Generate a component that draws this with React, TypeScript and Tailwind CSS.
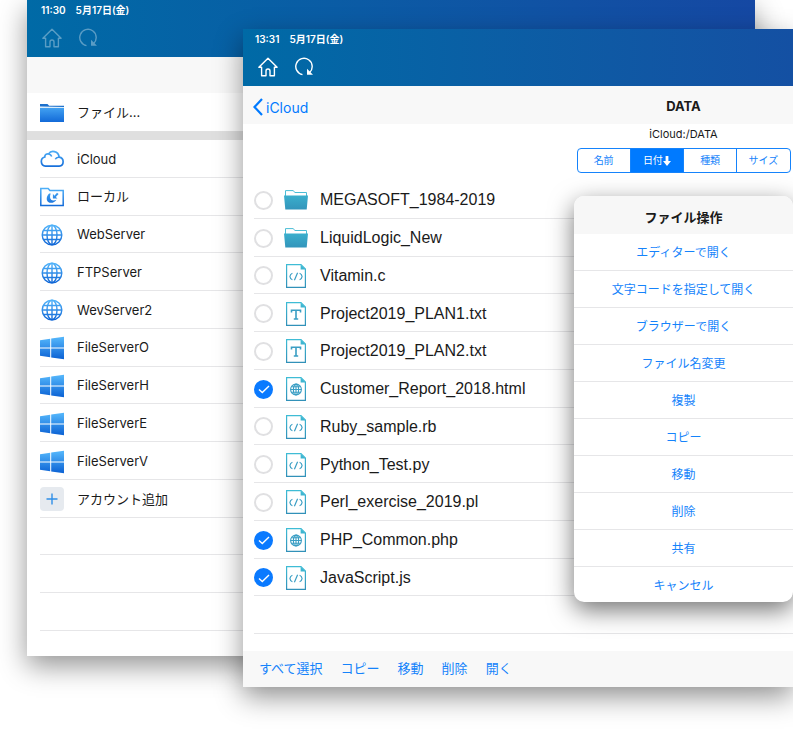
import type { ReactNode } from "react";
import clsx from "clsx";

type FileKind = "folder" | "code" | "text" | "web";

const SERVERS = [
  { name: "iCloud", icon: "cloud" },
  { name: "ローカル", icon: "local" },
  { name: "WebServer", icon: "globe" },
  { name: "FTPServer", icon: "globe" },
  { name: "WevServer2", icon: "globe" },
  { name: "FileServerO", icon: "windows" },
  { name: "FileServerH", icon: "windows" },
  { name: "FileServerE", icon: "windows" },
  { name: "FileServerV", icon: "windows" },
  { name: "アカウント追加", icon: "plus" },
];

const FILES: { name: string; kind: FileKind; checked: boolean }[] = [
  { name: "MEGASOFT_1984-2019", kind: "folder", checked: false },
  { name: "LiquidLogic_New", kind: "folder", checked: false },
  { name: "Vitamin.c", kind: "code", checked: false },
  { name: "Project2019_PLAN1.txt", kind: "text", checked: false },
  { name: "Project2019_PLAN2.txt", kind: "text", checked: false },
  { name: "Customer_Report_2018.html", kind: "web", checked: true },
  { name: "Ruby_sample.rb", kind: "code", checked: false },
  { name: "Python_Test.py", kind: "code", checked: false },
  { name: "Perl_exercise_2019.pl", kind: "code", checked: false },
  { name: "PHP_Common.php", kind: "web", checked: true },
  { name: "JavaScript.js", kind: "code", checked: true },
];

const SORT_KEYS = ["名前", "日付", "種類", "サイズ"];

const FILE_ACTIONS = [
  "エディターで開く",
  "文字コードを指定して開く",
  "ブラウザーで開く",
  "ファイル名変更",
  "複製",
  "コピー",
  "移動",
  "削除",
  "共有",
  "キャンセル",
];

const TOOLBAR = ["すべて選択", "コピー", "移動", "削除", "開く"];

const Gradients = () => (
  <svg className="absolute size-0" aria-hidden="true">
    <defs>
      <linearGradient id="blue" gradientUnits="userSpaceOnUse" x1="0" y1="2" x2="0" y2="22">
        <stop offset="0" stopColor="#52b4fa" />
        <stop offset="1" stopColor="#0f66d6" />
      </linearGradient>
      <linearGradient id="teal" gradientUnits="userSpaceOnUse" x1="0" y1="0" x2="0" y2="24">
        <stop offset="0" stopColor="#3fbdd6" />
        <stop offset="1" stopColor="#3190b8" />
      </linearGradient>
    </defs>
  </svg>
);

const Svg = ({ children }: { children: ReactNode }) => (
  <svg className="size-6 shrink-0" viewBox="0 0 24 24" fill="none" aria-hidden="true">
    {children}
  </svg>
);

const ServerIcon = ({ icon }: { icon: string }) => {
  switch (icon) {
    case "folder":
      return (
        <Svg>
          <path d="M0 5.500V3h7.500l1.600 1.700H24V6z" fill="#1c70cc" />
          <path d="M0 6.800h24V21H0z" fill="url(#blue)" />
        </Svg>
      );
    case "cloud":
      return (
        <Svg>
          <path
            d="M5.500 19.200A4.700 4.700 0 0 1 4.800 10C4.700 7.700 6.600 6.500 8.600 6.900 11 3 18.300 3.700 19.200 10.200 24.500 11 24.400 18.700 19.200 19.200z"
            stroke="url(#blue)"
            strokeWidth="1.700"
          />
          <path d="M8.600 6.900c1.500.2 2.700 1.100 3.100 2.600M15.300 12.300c.6-1.500 2-2.300 3.900-2.100" stroke="url(#blue)" strokeWidth="1.500" />
        </Svg>
      );
    case "local":
      return (
        <Svg>
          <path d="M.8 20.600V3.400h7.400l1.700 2h13.300v15.200z" stroke="url(#blue)" strokeWidth="1.500" />
          <path
            d="M9.200 8.400C6.300 11 6 15 8.200 16.900c2.400 1.900 6.500.8 8.300-2.200-1.900.8-4.200 1.100-5.400 0-1.300-1.300-1.300-4-.4-6.300z"
            fill="url(#blue)"
          />
          <path d="M12.900 8.800v4.800h4.600L15.800 12l2.800-3-1.600-1.200-2.600 2.900z" fill="url(#blue)" />
        </Svg>
      );
    case "globe":
      return (
        <Svg>
          <g stroke="url(#blue)" strokeWidth="1.400">
            <circle cx="12" cy="12" r="9.800" />
            <ellipse cx="12" cy="12" rx="5" ry="9.800" />
            <path d="M12.010 2 12 22M2 12.010 22 12M3.500 7.500h17M3.500 16.500h17" />
          </g>
        </Svg>
      );
    case "windows":
      return (
        <Svg>
          <path
            d="M0 4.200 10.200 2.700v8.800H0zM11.200 2.500 24 .7v10.800H11.200zM0 12.500h10.200v8.800L0 19.800zM11.200 12.500H24v10.800l-12.800-1.800z"
            fill="url(#blue)"
          />
        </Svg>
      );
    default:
      return (
        <span className="flex size-6 shrink-0 items-center justify-center rounded bg-[#e6eaef]">
          <svg className="size-3" viewBox="0 0 12 12" aria-hidden="true">
            <path d="M6 .5v11M.5 6h11" stroke="#2f8fe8" strokeWidth="1.400" />
          </svg>
        </span>
      );
  }
};

const FileIcon = ({ kind }: { kind: FileKind }) => {
  if (kind === "folder") {
    return (
      <Svg>
        <path d="M1.500 9V2.600h7.800l1.500 1.900h11.700V9" stroke="#4bbdd6" strokeWidth="1" />
        <path d="M0 7.500h24L22.700 21.500H1.300z" fill="url(#teal)" />
      </Svg>
    );
  }
  return (
    <Svg>
      <path d="M2.600.6h14.400l4.400 4.400v18.400H2.600z" stroke="url(#teal)" strokeWidth="1.200" />
      <path d="M16.600.6v4.800h4.800z" fill="url(#teal)" />
      {kind === "code" && (
        <path
          d="M8.400 9.200c-1.600.6-2.300 1.700-2.500 3.300.2 1.600.9 2.700 2.500 3.300M15.600 9.200c1.600.6 2.300 1.700 2.500 3.300-.2 1.600-.9 2.700-2.500 3.300M13.600 8.700l-3.200 7.600"
          stroke="#3a9ec4"
          strokeWidth="1.200"
        />
      )}
      {kind === "text" && (
        <path d="M7.500 10.500V8.200h9v2.300M12 8.200v8.800M9.800 17h4.400" stroke="#3a9ec4" strokeWidth="1.600" />
      )}
      {kind === "web" && (
        <g stroke="#3a9ec4" strokeWidth="1.100">
          <circle cx="12" cy="12.500" r="5.400" />
          <ellipse cx="12" cy="12.500" rx="2.600" ry="5.400" />
          <path d="M12 7v11M6.600 12.500h10.800M7.500 9.800h9M7.500 15.200h9" />
        </g>
      )}
    </Svg>
  );
};

const WindowHeader = ({ time, dimmed }: { time: string; dimmed?: boolean }) => (
  <header
    className={clsx(
      "h-[57px] shrink-0 bg-linear-to-r from-[#006aa6] pt-1 text-white",
      dimmed ? "to-[#1548a3]" : "to-[#1450a3]",
    )}
  >
    <div className={clsx("flex gap-2.5 text-[10px] leading-3 font-semibold", dimmed ? "px-3.5" : "px-3")}>
      <span>{time}</span>
      <span>5月17日(金)</span>
    </div>
    <div className={clsx("mt-3 flex gap-4 px-[15px]", dimmed && "opacity-35")}>
      <button type="button" aria-label="ホーム">
        <svg className="size-5" viewBox="0 0 20 20" fill="none" stroke="currentColor" strokeWidth="1.400" aria-hidden="true">
          <path d="M10 1.200.9 10.200H3.600V18.800H8V14a2 2 0 0 1 4 0v4.800h4.400v-8.600h2.700z" strokeLinejoin="round" />
        </svg>
      </button>
      <button type="button" aria-label="更新">
        <svg className="size-5" viewBox="0 0 20 20" fill="none" stroke="currentColor" strokeWidth="1.400" aria-hidden="true">
          <path d="M8.500 17.600A8.200 8.200 0 1 1 15.600 15.500" />
          <path d="M13 11.800v6h6z" fill="currentColor" stroke="none" />
        </svg>
      </button>
    </div>
  </header>
);

const ServerRow = ({ name, icon }: { name: string; icon: string }) => (
  <button type="button" className="flex size-full items-center gap-[13px] pt-0.5 text-left text-[13px]">
    <ServerIcon icon={icon} />
    {name}
  </button>
);

const ServerWindow = () => (
  <section className="absolute top-0 right-[38px] bottom-[73px] left-[27px] flex flex-col bg-white shadow-[0_10px_26px_rgba(0,0,0,0.42)]">
    <WindowHeader time="11:30" dimmed />
    <div className="h-9 shrink-0 bg-[#f8f8f8]" />
    <div className="h-[39px] shrink-0 border-b border-[#e0e0e0] pl-[13px]">
      <ServerRow name="ファイル..." icon="folder" />
    </div>
    <div className="h-2 shrink-0 bg-[#dfdfdf]" />
    <ul className="mb-[25px] ml-[13px] flex flex-1 flex-col">
      {SERVERS.map((item) => (
        <li key={item.name} className="flex-1 border-b border-[#e6e6e8]">
          <ServerRow name={item.name} icon={item.icon} />
        </li>
      ))}
      <li className="flex-1 border-b border-[#e6e6e8]" />
      <li className="flex-1 border-b border-[#e6e6e8]" />
      <li className="flex-1 border-b border-[#e6e6e8]" />
    </ul>
  </section>
);

const FileRow = ({ file }: { file: (typeof FILES)[number] }) => (
  <li className="flex-1 border-b border-[#e6e6e8]">
    <label className="flex h-full items-center pt-0.5 font-['Liberation_Sans',sans-serif] text-[16px]">
      <span className="grid size-[19px] place-items-center">
        <input
          type="checkbox"
          defaultChecked={file.checked}
          className="peer col-start-1 row-start-1 size-[19px] appearance-none rounded-full border-2 border-[#e0e0e2] bg-white checked:border-[#0a7aff] checked:bg-[#0a7aff]"
        />
        <svg
          className="pointer-events-none invisible col-start-1 row-start-1 size-3 peer-checked:visible"
          viewBox="0 0 12 12"
          fill="none"
          aria-hidden="true"
        >
          <path d="M1 6.500 4.300 9.500 11 3" stroke="white" strokeWidth="1.400" />
        </svg>
      </span>
      <span className="mr-3 ml-[11px] flex">
        <FileIcon kind={file.kind} />
      </span>
      {file.name}
    </label>
  </li>
);

const ActionMenu = () => (
  <div
    role="menu"
    className="absolute top-[167px] right-0 w-[219px] overflow-hidden rounded-[10px] bg-white shadow-[0_8px_24px_rgba(0,0,0,0.55)]"
  >
    <h2 className="h-[38px] bg-[#f7f7f7] pt-1 text-center text-[13px] leading-[34px] font-bold">ファイル操作</h2>
    {FILE_ACTIONS.map((action) => (
      <button
        key={action}
        type="button"
        role="menuitem"
        className="block h-[37px] w-full border-b border-[#e6e6e8] pt-0.5 text-center text-[12px] text-[#1583fb] last:h-[35px] last:border-b-0"
      >
        {action}
      </button>
    ))}
  </div>
);

const SortBar = () => (
  <div className="mx-auto flex h-[25px] w-[214px] overflow-hidden rounded border border-[#1583fb]">
    {SORT_KEYS.map((key) => (
      <button
        key={key}
        type="button"
        aria-pressed={key === "日付"}
        className={clsx(
          "flex flex-1 items-center justify-center border-r border-[#1583fb] text-[10px] last:border-r-0",
          key === "日付" ? "bg-[#007aff] text-white" : "text-[#1583fb]",
        )}
      >
        {key}
        {key === "日付" && (
          <svg className="h-2.5 w-2" viewBox="0 0 8 10" aria-hidden="true">
            <path d="M2.600 0h2.800v5H8L4 10 0 5h2.600z" fill="white" />
          </svg>
        )}
      </button>
    ))}
  </div>
);

const FileWindow = () => (
  <section className="absolute top-[29px] right-0 bottom-[42px] left-[243px] flex flex-col bg-white shadow-[0_10px_26px_rgba(0,0,0,0.42)]">
    <WindowHeader time="13:31" />
    <div className="flex h-[38px] shrink-0 items-center justify-between bg-[#f8f8f8] pt-1 pl-[10px]">
      <button type="button" className="flex items-center gap-[3px] text-[14px] text-[#007aff]">
        <svg className="h-[18px] w-2.5" viewBox="0 0 10 18" fill="none" aria-hidden="true">
          <path d="M9 1 1.500 9 9 17" stroke="currentColor" strokeWidth="2.200" />
        </svg>
        iCloud
      </button>
      <h1 className="w-[219px] text-center text-[13px] font-bold">DATA</h1>
    </div>
    <div className="h-[57px] w-[219px] shrink-0 self-end">
      <p className="h-6 text-center text-[11px] leading-5">iCloud:/DATA</p>
      <SortBar />
    </div>
    <ul className="ml-[11px] flex flex-1 flex-col">
      {FILES.map((file) => (
        <FileRow key={file.name} file={file} />
      ))}
      <li className="flex-1 border-b border-[#e6e6e8]" />
    </ul>
    <footer className="mt-[17px] flex h-9 shrink-0 items-center gap-[18px] bg-[#f8f8f8] px-4 text-[13px] text-[#1583fb]">
      {TOOLBAR.map((label) => (
        <button key={label} type="button">
          {label}
        </button>
      ))}
    </footer>
    <ActionMenu />
  </section>
);

export default function App() {
  return (
    <main className="relative h-screen overflow-hidden bg-white font-[Inter,'Noto_Sans_CJK_JP',sans-serif] text-[#1a1a1a]">
      <Gradients />
      <ServerWindow />
      <FileWindow />
    </main>
  );
}
